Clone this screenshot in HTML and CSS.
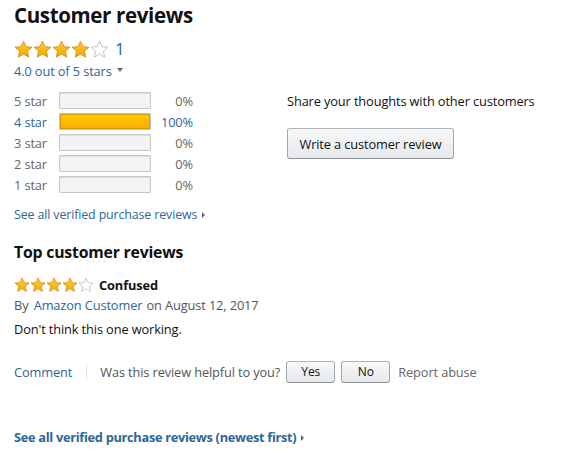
FILE: index.html
```html
<!DOCTYPE html>
<html>
<head>
<meta charset="utf-8">
<link rel="stylesheet" href="styles.css">
</head>
<body>
<svg width="0" height="0" class="defs">
  <defs>
    <linearGradient id="gold" x1="0" y1="0" x2="0" y2="1">
      <stop offset="0" stop-color="#ffce3d"/>
      <stop offset="1" stop-color="#f0a800"/>
    </linearGradient>
    <symbol id="star" viewBox="0 0 20 20">
      <path d="M10 1.2 L12.6 7 L18.9 7.6 L14.1 11.8 L15.5 18.1 L10 14.8 L4.5 18.1 L5.9 11.8 L1.1 7.6 L7.4 7 Z"/>
    </symbol>
  </defs>
</svg>
<main class="page">
  <h2 class="title">Customer reviews</h2>
  <div class="rating">
    <span class="stars big">
      <svg class="s full"><use href="#star"/></svg><svg class="s full"><use href="#star"/></svg><svg class="s full"><use href="#star"/></svg><svg class="s full"><use href="#star"/></svg><svg class="s empty"><use href="#star"/></svg>
    </span>
    <a class="link count">1</a>
  </div>
  <div class="outof"><a class="link">4.0 out of 5 stars</a><span class="caret"></span></div>

  <div class="summary">
    <div class="histogram">
      <div class="hrow"><span class="lbl">5 star</span><span class="bar"><span class="fill" style="width:0%"></span></span><span class="pct">0%</span></div>
      <div class="hrow active"><span class="lbl">4 star</span><span class="bar"><span class="fill" style="width:100%"></span></span><span class="pct">100%</span></div>
      <div class="hrow"><span class="lbl">3 star</span><span class="bar"><span class="fill" style="width:0%"></span></span><span class="pct">0%</span></div>
      <div class="hrow"><span class="lbl">2 star</span><span class="bar"><span class="fill" style="width:0%"></span></span><span class="pct">0%</span></div>
      <div class="hrow"><span class="lbl">1 star</span><span class="bar"><span class="fill" style="width:0%"></span></span><span class="pct">0%</span></div>
    </div>
    <div class="share">
      <p class="share-text">Share your thoughts with other customers</p>
      <button class="btn write">Write a customer review</button>
    </div>
  </div>

  <a class="link seeall">See all verified purchase reviews<span class="arrow"></span></a>

  <h3 class="subtitle">Top customer reviews</h3>
  <div class="review">
    <div class="rhead">
      <span class="stars small">
        <svg class="s full"><use href="#star"/></svg><svg class="s full"><use href="#star"/></svg><svg class="s full"><use href="#star"/></svg><svg class="s full"><use href="#star"/></svg><svg class="s empty"><use href="#star"/></svg>
      </span>
      <b class="rtitle">Confused</b>
    </div>
    <div class="byline">By <a class="link author">Amazon Customer</a> on August 12, 2017</div>
    <p class="rbody">Don't think this one working.</p>
    <div class="actions">
      <a class="link">Comment</a>
      <span class="sep"></span>
      <span class="helpful">Was this review helpful to you?</span>
      <button class="btn small-btn">Yes</button>
      <button class="btn small-btn">No</button>
      <span class="report">Report abuse</span>
    </div>
  </div>

  <a class="link seeall-bottom">See all verified purchase reviews (newest first)<span class="arrow"></span></a>
</main>
</body>
</html>
```

FILE: styles.css
```css
* { box-sizing: border-box; }
html, body { margin: 0; padding: 0; background: #fff; }
body {
  font-family: "Open Sans", "Noto Sans", sans-serif;
  font-size: 12.8px;
  letter-spacing: -0.12px;
  color: #111;
}
.defs { position: absolute; width: 0; height: 0; }
.page { padding: 0 14px; }
.link { color: #2e6696; text-decoration: none; }
.title {
  margin: 0;
  padding-top: 1px;
  font-size: 20.5px;
  font-weight: 700;
  line-height: 28px;
  letter-spacing: -0.35px;
}
.rating { display: flex; align-items: center; margin-top: 10px; height: 20px; }
.stars { display: inline-flex; }
.stars .s { fill: url(#gold); stroke: #d58a0b; stroke-width: 0.9; }
.stars .s.empty { fill: #fff; stroke: #b7b7b7; }
.stars.big .s { width: 19px; height: 19px; }
.stars.small .s { width: 16px; height: 16px; }
.count { font-size: 17px; margin-left: 6px; line-height: 20px; }
.outof { margin-top: 3px; line-height: 18px; display: flex; align-items: center; }
.caret {
  display: inline-block; margin-left: 5px; margin-top: -3px;
  border-left: 3px solid transparent; border-right: 3px solid transparent;
  border-top: 4px solid #666;
}
.summary { display: flex; margin-top: 10px; }
.histogram { width: 273px; }
.hrow { display: flex; align-items: center; height: 21px; color: #666; }
.hrow.active { color: #2e6696; }
.lbl { width: 45px; }
.bar {
  width: 92px; height: 17px;
  background: #f3f3f3;
  border: 1px solid #c6c6c6;
  border-radius: 1px;
  display: block;
  box-shadow: inset 0 1px 1px rgba(0,0,0,0.08);
}
.fill {
  display: block; height: 100%;
  background: linear-gradient(#ffce00, #ffa700);
  box-shadow: inset 0 0 0 1px #d69a00;
}
.pct { width: 42px; text-align: right; }
.share { padding-top: 1px; }
.share-text { margin: 0; line-height: 21px; }
.btn {
  font-family: inherit;
  letter-spacing: inherit;
  color: #111;
  background: linear-gradient(#f7f8fa, #e7e9ec);
  border: 1px solid #adb1b8;
  border-color: #adb1b8 #a2a6ac #8d9096;
  border-radius: 3px;
  cursor: pointer;
}
.write {
  margin-top: 16px; height: 31px; width: 167px;
  font-size: 12.8px; padding: 0;
}
.seeall { display: block; margin-top: 11px; line-height: 18px; font-size: 12.4px; }
.arrow {
  display: inline-block; margin-left: 5px; vertical-align: 1px;
  border-top: 3px solid transparent; border-bottom: 3px solid transparent;
  border-left: 3px solid #666;
}
.subtitle {
  margin: 17px 0 0; font-size: 15.8px; font-weight: 700; line-height: 22px;
  letter-spacing: -0.2px;
}
.rhead { display: flex; align-items: center; margin-top: 13px; height: 18px; }
.rtitle { margin-left: 5px; font-size: 12.8px; }
.byline { color: #555; margin-top: 2px; line-height: 18px; }
.author { margin: 0 1px 0 2px; }
.rbody { margin: 6px 0 0; line-height: 18px; }
.actions { display: flex; align-items: center; margin-top: 22px; height: 23px; color: #555; }
.sep { width: 1px; height: 14px; background: #ddd; margin: 0 13px 0 14px; }
.helpful { margin-right: 6px; }
.small-btn { height: 22px; width: 49px; font-size: 12px; padding: 0; margin-right: 6px; }
.report { margin-left: 2px; color: #666; }
.seeall-bottom { display: block; margin-top: 45px; font-weight: 700; line-height: 18px; letter-spacing: -0.3px; }
```
